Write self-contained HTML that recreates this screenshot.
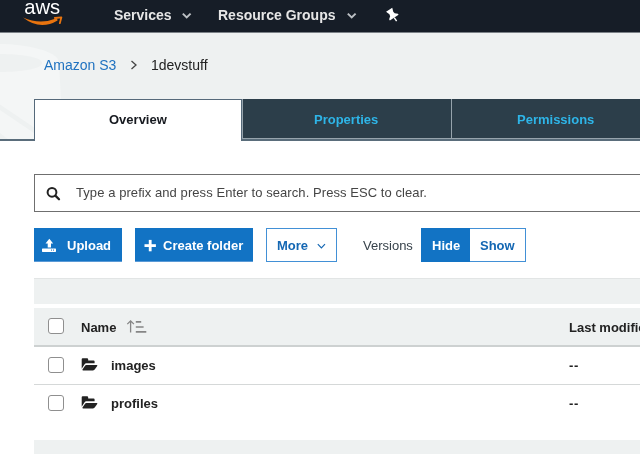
<!DOCTYPE html>
<html><head><meta charset="utf-8">
<style>
*{box-sizing:border-box;margin:0;padding:0}
html,body{width:640px;height:454px;overflow:hidden;background:#fff;font-family:"Liberation Sans",sans-serif;}
#root{position:relative;width:640px;height:454px;overflow:hidden;background:#fff}
.abs{position:absolute;white-space:nowrap;will-change:transform}
#nav{left:0;top:0;width:640px;height:32px;background:#161d27;border-bottom:0}
#navb{left:0;top:32px;width:640px;height:1px;background:#7b8187}
#hdr{left:0;top:33px;width:640px;height:107px;background:#eef1f1;overflow:hidden}
.navt{color:#e6e6e6;font-weight:bold;font-size:14px;line-height:16px;top:7px}
.bc{font-size:14px;line-height:16px;top:57px}
#tabline{left:0;top:139px;width:640px;height:2px;background:#5a6d7b}
#tab1{left:34px;top:99px;width:208px;height:42px;background:#fff;border:1px solid #55697a;border-bottom:none}
#tab2{left:243px;top:99px;width:208px;height:39px;background:#2c3e4a}
#tab3{left:452px;top:99px;width:188px;height:39px;background:#2c3e4a}
#tabl{left:242px;top:138px;width:398px;height:1px;background:#96a3ac}
.tabt{font-weight:bold;font-size:13px;line-height:16px;top:112px}
#search{left:34px;top:174px;width:620px;height:38px;border:1px solid #6f6f6f;background:#fff}
.btn{top:228px;height:34px;background:#1273c4;border-bottom:1px solid #5a9ad6}
.bt{top:238px;font-size:13px;line-height:16px;font-weight:bold}
.row{left:34px;width:606px}
.cb{width:16px;height:16px;border:1px solid #8f8f8f;border-radius:3px;background:#fff;left:48px}
.cell{font-size:13px;line-height:16px;color:#222;font-weight:bold}
</style></head><body><div id="root">
<div id="nav" class="abs"></div><div id="navb" class="abs"></div>
<div id="hdr" class="abs">
<svg width="640" height="107" viewBox="0 0 640 107" style="position:absolute;left:0;top:0">
<path d="M0 11 C25 11 58 18 59 29 L63 107 L0 107 Z" fill="#f4f6f6"/>
<path d="M0 21 C20 21 42 24 42 30 C42 36 20 39 0 39 Z" fill="#eef1f1"/>
<path d="M0 71.5 L34 94.5 L34 100 L0 77 Z" fill="#eef1f1"/><path d="M0 100 L9 107 L0 107 Z" fill="#eef1f1"/>
</svg>
</div>
<!-- aws logo -->
<svg class="abs" style="left:20px;top:0px" width="46" height="30" viewBox="20 0 46 30">
<text x="24.2" y="14" font-family="Liberation Sans, sans-serif" font-size="21" fill="#fff" textLength="36" lengthAdjust="spacingAndGlyphs">aws</text>
<path d="M23 17.5 Q40 25 57 18.3 L57.6 20.4 Q40 31 23 17.5 Z" fill="#e8740f"/>
<path d="M54.8 18 L61.4 17.3 L59.8 23.2" stroke="#e8740f" stroke-width="1.8" fill="none" stroke-linecap="round" stroke-linejoin="round"/>
</svg>
<div class="abs navt" style="left:114px">Services</div>
<svg class="abs" style="left:181px;top:12px" width="12" height="8" viewBox="0 0 12 8"><path d="M1.8 1.6 L5.7 5.5 L9.6 1.6" stroke="#bcc0c4" stroke-width="1.9" fill="none"/></svg>
<div class="abs navt" style="left:218px">Resource Groups</div>
<svg class="abs" style="left:346px;top:12px" width="12" height="8" viewBox="0 0 12 8"><path d="M1.8 1.6 L5.7 5.5 L9.6 1.6" stroke="#bcc0c4" stroke-width="1.9" fill="none"/></svg>
<svg class="abs" style="left:370px;top:0px" width="50" height="32" viewBox="370 0 50 32"><g transform="translate(389.15 9.75) rotate(-33)" fill="#fff"><polygon points="-3.7,0 3.7,0 2.3,4 2.7,6 5.2,8 5.2,9.3 -5.2,9.3 -5.2,8 -2.7,6 -2.3,4"/><rect x="-0.7" y="9.3" width="1.4" height="4.4"/></g></svg>

<div class="abs bc" style="left:44px;color:#1f72c0">Amazon S3</div>
<svg class="abs" style="left:130px;top:59px" width="8" height="12" viewBox="0 0 8 12"><path d="M1.5 2 L6 6 L1.5 10" stroke="#444" stroke-width="1.3" fill="none"/></svg>
<div class="abs bc" style="left:151px;color:#222">1devstuff</div>

<div id="tabline" class="abs"></div>
<div id="tab1" class="abs"></div>
<div class="abs" style="left:242px;top:99px;width:1px;height:40px;background:#96a3ac"></div>
<div id="tabl" class="abs"></div>
<div id="tab2" class="abs"></div>
<div class="abs" style="left:451px;top:99px;width:1px;height:39px;background:#96a3ac"></div>
<div id="tab3" class="abs"></div>
<div class="abs tabt" style="left:109px;color:#16191f">Overview</div>
<div class="abs tabt" style="left:314px;color:#2eb5e8">Properties</div>
<div class="abs tabt" style="left:517px;color:#2eb5e8">Permissions</div>

<div id="search" class="abs"></div>
<svg class="abs" style="left:44px;top:184px" width="20" height="20" viewBox="44 184 20 20"><circle cx="52" cy="192.3" r="4.4" stroke="#222" stroke-width="2" fill="none"/><path d="M55.6 195.9 L59 199.3" stroke="#222" stroke-width="2.3" stroke-linecap="round"/></svg>
<div class="abs" style="left:76px;top:185px;font-size:13px;line-height:16px;color:#454545;letter-spacing:0.07px">Type a prefix and press Enter to search. Press ESC to clear.</div>

<div class="abs btn" style="left:34px;width:88px"></div>
<svg class="abs" style="left:40px;top:236px" width="20" height="20" viewBox="40 236 20 20" fill="#fff"><polygon points="49.3,238.8 53.2,243.4 51,243.4 51,247.6 47.7,247.6 47.7,243.4 45.5,243.4"/><rect x="42" y="248.4" width="14" height="3.5" rx="0.6"/><rect x="53" y="249.6" width="1" height="1" fill="#1273c4"/><rect x="51" y="249.6" width="1" height="1" fill="#1273c4"/></svg>
<div class="abs bt" style="left:67px;color:#fff">Upload</div>
<div class="abs btn" style="left:135px;width:118px"></div>
<svg class="abs" style="left:142px;top:238px" width="16" height="16" viewBox="142 238 16 16" fill="#fff"><rect x="144.5" y="244.2" width="11.4" height="2.8"/><rect x="148.8" y="239.9" width="2.8" height="11.4"/></svg>
<div class="abs bt" style="left:163px;color:#fff">Create folder</div>
<div class="abs" style="left:266px;top:228px;width:71px;height:34px;border:1px solid #4290d6;background:#fff"></div>
<div class="abs bt" style="left:277px;color:#1467b3">More</div>
<svg class="abs" style="left:316px;top:242px" width="11" height="8" viewBox="316 242 11 8"><path d="M317.8 244.2 L321.4 247.8 L325 244.2" stroke="#1467b3" stroke-width="1.2" fill="none"/></svg>
<div class="abs bt" style="left:363px;color:#37424b;font-weight:normal">Versions</div>
<div class="abs" style="left:421px;top:228px;width:105px;height:34px;border:1px solid #4290d6;background:#fff"></div>
<div class="abs" style="left:421px;top:228px;width:49px;height:34px;background:#1273c4"></div>
<div class="abs bt" style="left:432px;color:#fff">Hide</div>
<div class="abs bt" style="left:480px;color:#1467b3">Show</div>

<div class="abs row" style="top:278px;height:26px;background:#eef1f1;border-top:1px solid #e2e5e5"></div>
<div class="abs row" style="top:308px;height:39px;background:#eef1f1;border-bottom:2px solid #cdd1d1"></div>
<div class="abs row" style="top:384px;height:1px;background:#d5d8d8"></div>
<div class="abs row" style="top:440px;height:14px;background:#eef1f1"></div>
<div class="abs cb" style="top:318px"></div>
<div class="abs cb" style="top:357px"></div>
<div class="abs cb" style="top:395px"></div>
<div class="abs cell" style="left:81px;top:320px">Name</div>
<svg class="abs" style="left:126px;top:319px" width="22" height="16" viewBox="126 319 22 16" fill="none" stroke="#858585"><path stroke-width="1.3" d="M130.6 332.5 V320.8 M127.3 324.1 L130.6 320.8 L133.9 324.1"/><path stroke-width="1.6" d="M135.8 321.9 H141.2 M135.8 327 H143.6 M135.8 331.9 H146.3"/></svg>
<svg class="abs" style="left:80px;top:357px" width="20" height="16" viewBox="80 357 20 16" fill="#222"><path d="M81.7 359.3 Q81.7 358.3 82.7 358.3 H87 Q88.2 358.3 88.2 359.5 V360.6 H93.6 Q94.6 360.6 94.6 361.6 V363.3 H86.4 Q85.2 363.3 84.6 364.3 L81.7 368.8 Z"/><path d="M86.4 364.9 H96.6 Q97.8 364.9 97.2 365.9 L94.7 369.6 Q94.1 370.4 93.1 370.4 H83 Q82 370.4 82.5 369.6 L85.2 365.5 Q85.6 364.9 86.4 364.9 Z"/></svg>
<svg class="abs" style="left:80px;top:395px" width="20" height="16" viewBox="80 357 20 16" fill="#222"><path d="M81.7 359.3 Q81.7 358.3 82.7 358.3 H87 Q88.2 358.3 88.2 359.5 V360.6 H93.6 Q94.6 360.6 94.6 361.6 V363.3 H86.4 Q85.2 363.3 84.6 364.3 L81.7 368.8 Z"/><path d="M86.4 364.9 H96.6 Q97.8 364.9 97.2 365.9 L94.7 369.6 Q94.1 370.4 93.1 370.4 H83 Q82 370.4 82.5 369.6 L85.2 365.5 Q85.6 364.9 86.4 364.9 Z"/></svg>
<div class="abs cell" style="left:111px;top:358px">images</div>
<div class="abs cell" style="left:111px;top:396px">profiles</div>
<div class="abs cell" style="left:569px;top:320px">Last modified</div>
<div class="abs cell" style="left:569px;top:358px;letter-spacing:0.7px">--</div>
<div class="abs cell" style="left:569px;top:396px;letter-spacing:0.7px">--</div>
</div></body></html>
